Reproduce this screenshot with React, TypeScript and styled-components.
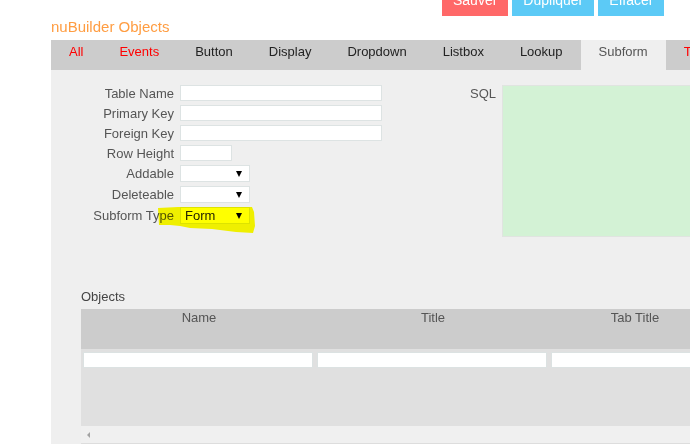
import styled, { createGlobalStyle } from "styled-components";

const GlobalStyle = createGlobalStyle`
    body {
        margin: 0;
        background: #ffffff;
        font-family: "Liberation Sans", Arial, sans-serif;
        overflow: hidden;
    }
`;

const Page = styled.div`
    position: relative;
    display: flow-root;
    width: 800px;
    height: 444px;
    padding-left: 51px;
    box-sizing: border-box;
`;

const ButtonBar = styled.div`
    display: flex;
    gap: 4px;
    margin-top: -16px;
    margin-left: 391px;
`;

const ActionButton = styled.div<{ $tone: "red" | "blue" }>`
    height: 32px;
    line-height: 32px;
    padding: 0 11px;
    font-size: 14px;
    color: #ffffff;
    background: ${({ $tone }) => ($tone === "red" ? "#ff6868" : "#5ccaf6")};
`;

const Title = styled.div`
    font-size: 15px;
    line-height: 18px;
    padding-top: 2px;
    color: #ff9d42;
    margin-bottom: 4px;
`;

const TabBar = styled.div`
    display: flex;
    height: 30px;
    background: #cccccc;
`;

const Tab = styled.div<{ $active?: boolean; $red?: boolean }>`
    padding: 4px 18px 0;
    line-height: 16px;
    font-size: 13px;
    white-space: nowrap;
    background: ${({ $active }) => ($active ? "#efefef" : "transparent")};
    color: ${({ $active, $red }) => ($active ? "#555555" : $red ? "#ff0000" : "#222222")};
`;

const Panel = styled.div`
    background: #efefef;
    height: 374px;
    padding-top: 15px;
    box-sizing: border-box;
`;

const TopSection = styled.div`
    display: flex;
    align-items: flex-start;
`;

const Form = styled.div`
    display: flex;
    flex-direction: column;
    gap: 4px;
    width: 331px;
`;

const Row = styled.div`
    display: flex;
    align-items: center;
    gap: 6px;
`;

const Label = styled.div`
    width: 123px;
    text-align: right;
    font-size: 13px;
    color: #555555;
    white-space: nowrap;
`;

const TextInput = styled.div<{ $width: number }>`
    width: ${({ $width }) => $width}px;
    height: 16px;
    box-sizing: border-box;
    background: #ffffff;
    border: 1px solid #dde3e3;
`;

const SelectBox = styled.div`
    width: 70px;
    height: 17px;
    box-sizing: border-box;
    background: #ffffff;
    border: 1px solid #dde3e3;
    display: flex;
    align-items: center;
    justify-content: space-between;
    padding: 0 7px 0 4px;
    font-size: 13px;
    color: #222222;
`;

const Arrow = styled.span`
    width: 0;
    height: 0;
    border-left: 3px solid transparent;
    border-right: 3px solid transparent;
    border-top: 6px solid #000000;
`;

const SqlField = styled.div`
    display: flex;
    gap: 6px;
    margin-left: 88px;
`;

const SqlLabel = styled.div`
    font-size: 13px;
    color: #555555;
    line-height: 16px;
    padding-top: 1px;
`;

const SqlBox = styled.div`
    width: 300px;
    height: 152px;
    background: #d3f2d5;
    border: 1px solid #e0e4e0;
    box-sizing: border-box;
`;

const Objects = styled.div`
    margin: 51px 0 0 30px;
`;

const ObjectsLabel = styled.div`
    font-size: 13px;
    line-height: 17px;
    color: #444444;
    margin-bottom: 4px;
`;

const Grid = styled.div`
    width: 700px;
`;

const GridHeader = styled.div`
    display: flex;
    height: 40px;
    padding-left: 1px;
    background: #cccccc;
`;

const HeaderCell = styled.div<{ $width: number }>`
    width: ${({ $width }) => $width}px;
    padding-top: 1px;
    text-align: center;
    font-size: 13px;
    color: #555555;
`;

const GridBody = styled.div`
    height: 77px;
    background: #e0e0e0;
    padding: 3px 0 0 2px;
    box-sizing: border-box;
`;

const GridRow = styled.div`
    display: flex;
    gap: 4px;
`;

const CellInput = styled.div<{ $width: number }>`
    width: ${({ $width }) => $width}px;
    height: 16px;
    box-sizing: border-box;
    background: #ffffff;
    border: 1px solid #dce2e2;
`;

const ScrollBar = styled.div`
    height: 17px;
    background: #f0f0f0;
    border-bottom: 1px solid #dddddd;
    display: flex;
    align-items: center;
    padding-left: 6px;
`;

const ScrollArrow = styled.span`
    width: 0;
    height: 0;
    border-top: 3px solid transparent;
    border-bottom: 3px solid transparent;
    border-right: 3px solid #a3a3a3;
`;

const Highlight = styled.svg`
    position: absolute;
    left: 0;
    top: 0;
    pointer-events: none;
    mix-blend-mode: multiply;
`;

const tabs = [
    { name: "All", red: true },
    { name: "Events", red: true },
    { name: "Button" },
    { name: "Display" },
    { name: "Dropdown" },
    { name: "Listbox" },
    { name: "Lookup" },
    { name: "Subform", active: true },
    { name: "Tab", red: true },
];

export default function App() {
    return (
        <>
            <GlobalStyle />
            <Page>
                <ButtonBar>
                    <ActionButton $tone="red">Sauver</ActionButton>
                    <ActionButton $tone="blue">Dupliquer</ActionButton>
                    <ActionButton $tone="blue">Effacer</ActionButton>
                </ButtonBar>
                <Title>nuBuilder Objects</Title>
                <TabBar>
                    {tabs.map((t) => (
                        <Tab key={t.name} $active={t.active} $red={t.red}>
                            {t.name}
                        </Tab>
                    ))}
                </TabBar>
                <Panel>
                    <TopSection>
                        <Form>
                            <Row>
                                <Label>Table Name</Label>
                                <TextInput $width={202} />
                            </Row>
                            <Row>
                                <Label>Primary Key</Label>
                                <TextInput $width={202} />
                            </Row>
                            <Row>
                                <Label>Foreign Key</Label>
                                <TextInput $width={202} />
                            </Row>
                            <Row>
                                <Label>Row Height</Label>
                                <TextInput $width={52} />
                            </Row>
                            <Row>
                                <Label>Addable</Label>
                                <SelectBox>
                                    <span />
                                    <Arrow />
                                </SelectBox>
                            </Row>
                            <Row>
                                <Label>Deleteable</Label>
                                <SelectBox>
                                    <span />
                                    <Arrow />
                                </SelectBox>
                            </Row>
                            <Row>
                                <Label>Subform Type</Label>
                                <SelectBox>
                                    <span>Form</span>
                                    <Arrow />
                                </SelectBox>
                            </Row>
                        </Form>
                        <SqlField>
                            <SqlLabel>SQL</SqlLabel>
                            <SqlBox />
                        </SqlField>
                    </TopSection>
                    <Objects>
                        <ObjectsLabel>Objects</ObjectsLabel>
                        <Grid>
                            <GridHeader>
                                <HeaderCell $width={234}>Name</HeaderCell>
                                <HeaderCell $width={234}>Title</HeaderCell>
                                <HeaderCell $width={170}>Tab Title</HeaderCell>
                            </GridHeader>
                            <GridBody>
                                <GridRow>
                                    <CellInput $width={230} />
                                    <CellInput $width={230} />
                                    <CellInput $width={200} />
                                </GridRow>
                            </GridBody>
                            <ScrollBar>
                                <ScrollArrow />
                            </ScrollBar>
                        </Grid>
                    </Objects>
                </Panel>
                <Highlight width="690" height="444" viewBox="0 0 690 444">
                    <path
                        d="M158 208 L178 207 L252 207 L254 212 L255 226 L253 233 L236 232 L212 229 L190 228 L180 226 L170 225 L159 225 Z"
                        fill="#ffff00"
                    />
                </Highlight>
            </Page>
        </>
    );
}
